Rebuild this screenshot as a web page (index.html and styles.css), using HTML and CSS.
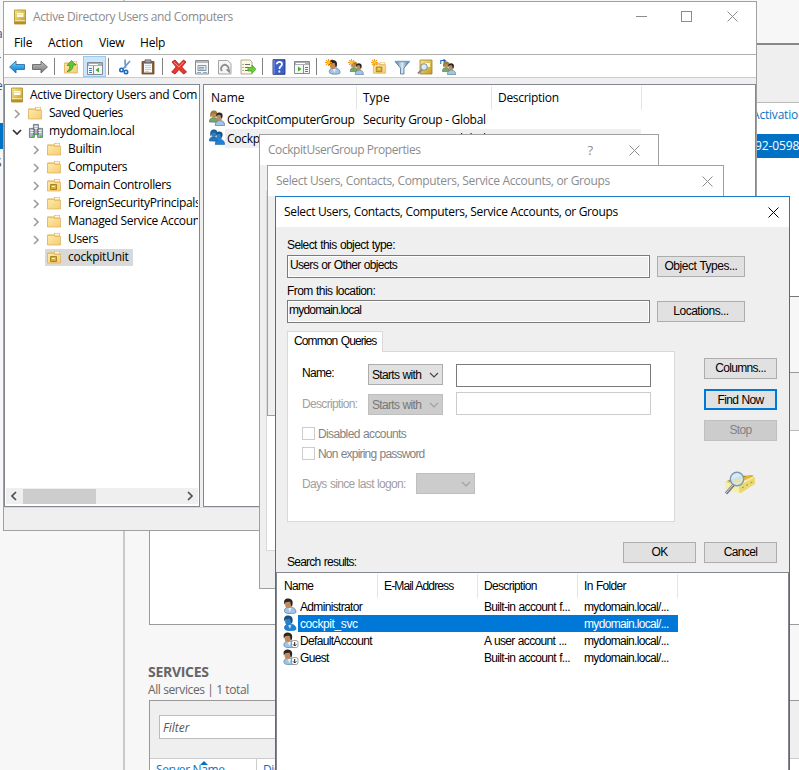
FILE: index.html
```html
<!DOCTYPE html>
<html lang="en">
<head>
<meta charset="utf-8">
<title>Active Directory Users and Computers</title>
<link rel="stylesheet" href="styles.css">
</head>
<body>
<svg class="defs" width="0" height="0" aria-hidden="true">
  <defs>
    <linearGradient id="gBlue" x1="0" y1="0" x2="0" y2="1"><stop offset="0" stop-color="#9fdcf8"/><stop offset=".5" stop-color="#2fa3e8"/><stop offset="1" stop-color="#1c79c8"/></linearGradient>
    <linearGradient id="gGrey" x1="0" y1="0" x2="0" y2="1"><stop offset="0" stop-color="#c4c4c4"/><stop offset="1" stop-color="#777"/></linearGradient>
    <linearGradient id="gFolder" x1="0" y1="0" x2="1" y2="1"><stop offset="0" stop-color="#ffeaa8"/><stop offset="1" stop-color="#f3cd76"/></linearGradient>
    <linearGradient id="gGold" x1="0" y1="0" x2="1" y2="1"><stop offset="0" stop-color="#f7e794"/><stop offset="1" stop-color="#c29a1c"/></linearGradient>
    <linearGradient id="gFunnel" x1="0" y1="0" x2="1" y2="0"><stop offset="0" stop-color="#4b7ba5"/><stop offset=".5" stop-color="#d9ebf7"/><stop offset="1" stop-color="#35658f"/></linearGradient>
  </defs>
  <symbol id="book" viewBox="0 0 14 16"><path d="M1.500 1h11v14h-11z" fill="url(#gGold)" stroke="#a98a2a" stroke-width=".8"/><path d="M4 4h6.500v4H4z" fill="#fffdf0"/><path d="M4 5.500h6.500" stroke="#e6d48a" stroke-width=".6"/><path d="M1.500 12h11v3h-11z" fill="#b8901c"/><path d="M2 11.800h10" stroke="#fbf3c8"/></symbol>
  <symbol id="folder" viewBox="0 0 16 16"><path d="M1.500 3.500h6.500V2h6v12H1.500z" fill="#e6b75c"/><path d="M8.800 2.600h4.600v2H8.800z" fill="#fff8dc"/><path d="M1.500 4.300h6l1 1h6v8.700h-13z" fill="url(#gFolder)" stroke="#dcae58" stroke-width=".7"/></symbol>
  <symbol id="ou" viewBox="0 0 16 16"><use href="#folder"/><path d="M4.500 7.500h6v5h-6z" fill="#d8ae2c" stroke="#9a7612" stroke-width=".8"/><path d="M6 9.500h3" stroke="#fff3b5"/></symbol>
  <symbol id="domain" viewBox="0 0 16 16"><g fill="#aeb7c2" stroke="#5f6873" stroke-width=".8"><path d="M5.400 1.400h5v10h-5zM1.400 5.400h5v9h-5zM9.600 5.400h5v9h-5z"/></g><path d="M2.500 7.500h3M2.500 9.500h3M10.500 7.500h3M10.500 9.500h3M6.500 3.500h3M6.500 5.500h3" stroke="#f2f5f8"/><path d="M4 12.500h2v1.500H4zM12 12.500h2v1.500h-2zM8 10h1.500v1.500H8z" fill="#3fd02c"/></symbol>
  <symbol id="person" viewBox="0 0 16 16"><path d="M2.500 13.500C2 10 5 9 8 9c4 0 6 2.500 6 5 0 1.300-2.500 1.700-6 1.700-3 0-5.300-.8-5.500-2.200z" fill="var(--shirt)" stroke="var(--edge)" stroke-width=".6"/><path d="M6 10l2 4 1.500-4.500z" fill="#fff" opacity=".75"/><ellipse cx="6.300" cy="6" rx="3.200" ry="4.300" fill="var(--skin)"/><path d="M2.500 6.500C1 2 3.500.2 6.500.4 10.500.6 11.800 4 9.800 8.800 8.500 8 9 5 8 3.800 6 3.400 4.500 4 3.600 4.200z" fill="var(--hair)"/></symbol>
  <symbol id="group" viewBox="0 0 16 16"><path d="M.4 12c-.2-2.600 1.300-4.300 4-4.300S9 9 9 12.300z" fill="var(--shirt2)" stroke="var(--edge)" stroke-width=".6"/><ellipse cx="4.800" cy="4.700" rx="2.600" ry="3.300" fill="var(--skin)"/><path d="M1.500 7.500C.6 3 1.800.5 5 .5s4 2.500 2.700 5C6.800 3.500 5 3.600 3.500 3.600z" fill="var(--hair2)"/><path d="M6.300 15.600c-.3-3.400 1.500-5.100 4.600-5.100s4.900 2 4.700 5.100z" fill="var(--shirt)" stroke="var(--edge)" stroke-width=".6"/><ellipse cx="10.300" cy="7.300" rx="2.700" ry="3.500" fill="var(--skin)"/><path d="M7.300 7C6.600 4 8 2.400 10.500 2.500c3 .1 3.900 2.600 2.500 6-1.500-.7-1-2.700-1.700-3.500-1.300-.5-2.300-.1-3 .2z" fill="var(--hair)"/></symbol>
  <symbol id="star" viewBox="0 0 8 8"><path d="M4 0v8M0 4h8M1.200 1.200l5.600 5.600M6.800 1.200L1.200 6.800" stroke="#f39a0d" stroke-width="1.200"/><circle cx="4" cy="4" r="1.500" fill="#ffd23c"/></symbol>
  <symbol id="down" viewBox="0 0 10 6"><path d="M1 1l4 4 4-4" fill="none" stroke="currentColor" stroke-width="1.100"/></symbol>
  <symbol id="cross" viewBox="0 0 11 11"><path d="M.5.5l10 10M10.500.5l-10 10" stroke="currentColor" stroke-width="1"/></symbol>
  <symbol id="right" viewBox="0 0 6 10"><path d="M1 1l4 4-4 4" fill="none" stroke="currentColor" stroke-width="1.700"/></symbol>
</svg>

<main class="desktop">
  <section class="manager">
    <aside class="manager-nav">
      <p class="nav-item n1">ar</p><p class="nav-item n2">r</p><p class="nav-item n3">er</p>
      <p class="nav-item active"></p><p class="nav-item n5">S</p>
    </aside>
    <div class="manager-body">
      <div class="tile tile-events">
        <div class="tile-bar"></div>
        <div class="tile-link">Activation</div>
        <div class="tile-row">92-0598</div>
      </div>
      <div class="tile tile-mid"><div class="tile-bar"></div></div>
      <h2 class="services-title">SERVICES</h2>
      <p class="services-sub">All services | 1 total</p>
      <div class="tile tile-services">
        <div class="filter-bar"><div class="filter">Filter</div></div>
        <div class="service-head"><span class="server-name">Server Name<i class="sort"></i></span><span class="display-name">Display Name</span></div>
      </div>
    </div>
  </section>

  <section class="window aduc">
    <header class="caption">
      <svg class="i-book"><use href="#book"/></svg><span class="caption-text aduc-title">Active Directory Users and Computers</span>
      <span class="win-min"></span><span class="win-max"></span><svg class="win-close"><use href="#cross"/></svg>
    </header>
    <nav class="menu"><span class="m-file">File</span><span class="m-action">Action</span><span class="m-view">View</span><span class="m-help">Help</span></nav>
    <div class="toolbar">
      <span class="tool"><svg viewBox="0 0 16 16"><path d="M.6 8L7 2v3.500h8.500v5H7V14z" fill="url(#gBlue)" stroke="#2a6ea8" stroke-width=".9"/></svg></span>
      <span class="tool"><svg viewBox="0 0 16 16"><path d="M15.400 8L9 2v3.500H.5v5H9V14z" fill="url(#gGrey)" stroke="#666" stroke-width=".9"/></svg></span>
      <span class="sep"></span>
      <span class="tool"><svg viewBox="0 0 16 16"><use href="#folder"/><path d="M4 12.500c2-1 3-3 2.800-6H4l4.500-5L13 6h-2.800c0 3.500-2 6.500-6.200 6.500z" fill="#62c537" stroke="#348d17" stroke-width=".7"/></svg></span>
      <span class="tool on"><svg viewBox="0 0 16 16"><path d="M.5 2.500h15v12H.5z" fill="#f7f7f7" stroke="#858b92"/><path d="M1 3h14v3H1z" fill="#a9b0b8"/><path d="M2 4.500h9" stroke="#fff"/><path d="M6.500 6v8" stroke="#858b92"/><path d="M2 8.500h3M2 10.500h3M2 12.500h3" stroke="#3d7fc1"/><path d="M12 7.500v5L8.500 10z" fill="#3fae2a"/></svg></span>
      <span class="sep"></span>
      <span class="tool"><svg viewBox="0 0 16 16"><path d="M8 .5L8.500 9M13 2L6 10" stroke="#6d9dc8" stroke-width="1.800"/><circle cx="4.500" cy="11" r="1.700" fill="none" stroke="#1769bd" stroke-width="1.600"/><circle cx="9" cy="13" r="1.700" fill="none" stroke="#1769bd" stroke-width="1.600"/></svg></span>
      <span class="tool"><svg viewBox="0 0 16 16"><path d="M2 2.500h12v12.500H2z" fill="#8a5f3a" stroke="#6b4522" stroke-width=".8"/><path d="M4 4.500h8v9H4z" fill="#f5f8fb"/><path d="M5 .8h6v3H5z" fill="#9aa2aa" stroke="#555" stroke-width=".7"/><path d="M5 6.500h6M5 8.500h6M5 10.500h6M5 12.500h4" stroke="#b7c4cf" stroke-width=".8"/></svg></span>
      <span class="sep"></span>
      <span class="tool"><svg viewBox="0 0 16 16"><path d="M1 3l3-2 4 4.500L12.500 1l2.500 2-4.300 5 4.800 5-3 2L8 10.500 4 15l-3.300-2L5.200 8z" fill="#e23b32" stroke="#b81c1a" stroke-width=".9"/><path d="M3 3l5 5 4.500-5" stroke="#ff8b80" fill="none"/></svg></span>
      <span class="tool"><svg viewBox="0 0 16 16"><path d="M1.500 1.500h13v13.500h-13z" fill="#f6f6f6" stroke="#8b8b8b"/><path d="M2 3h12" stroke="#b4bac0" stroke-width="2"/><path d="M4 6.500h8v5H4z" fill="#e2edf6" stroke="#8798a6"/><path d="M3 13.500h4M9 13.500h4" stroke="#8da9bf"/><path d="M5 8.500h5M5 10h5" stroke="#6c8ba5" stroke-width=".8"/></svg></span>
      <span class="tool"><svg viewBox="0 0 16 16"><path d="M1.500 1.500h9l3.500 3V15H1.500z" fill="#f5f5f5" stroke="#a5a5a5"/><path d="M5 12a3.700 3.700 0 1 1 6-.5" fill="none" stroke="#8d8d8d" stroke-width="1.700"/><path d="M8.500 10.500h4.500v4z" fill="#8d8d8d"/></svg></span>
      <span class="tool"><svg viewBox="0 0 16 16"><path d="M1 1h9l2 2v12H1z" fill="#fdf8df" stroke="#a9a48c" stroke-width=".9"/><path d="M2.500 5.500h1M5 5.500h5M2.500 8.500h1M5 8.500h3M2.500 11.500h1M5 11.500h4" stroke="#6d6d6d"/><path d="M8 8.500h4V6l4 4.300-4 4V12H8z" fill="#68cf3a" stroke="#3c9720" stroke-width=".7"/></svg></span>
      <span class="sep"></span>
      <span class="tool"><svg viewBox="0 0 16 16"><path d="M2 .7h12v14.600H2z" fill="#3d61c9" stroke="#24397f" stroke-width=".9"/><path d="M3 1v14" stroke="#829be6"/><path d="M5.800 5.300c0-3.300 5.200-3 5.200 0 0 2-2.600 2-2.600 4.700M8.400 11.500v2" fill="none" stroke="#fff" stroke-width="1.700"/></svg></span>
      <span class="tool"><svg viewBox="0 0 16 16"><path d="M.5 2.500h15v12H.5z" fill="#f7f7f7" stroke="#858b92"/><path d="M1 3h14v3H1z" fill="#a9b0b8"/><path d="M2 4.500h9" stroke="#fff"/><path d="M9.500 6v8" stroke="#858b92"/><path d="M11 8.500h3M11 10.500h3M11 12.500h3" stroke="#3d7fc1"/><path d="M4 7.500v5L7.500 10z" fill="#3fae2a"/></svg></span>
      <span class="sep"></span>
      <span class="tool"><svg viewBox="0 0 16 16"><use href="#person" x="2" width="15" height="16"/><use href="#star" width="7" height="7"/></svg></span>
      <span class="tool"><svg viewBox="0 0 16 16"><use href="#group" x="1.500" y="2" width="14.500" height="14"/><use href="#star" width="7" height="7"/></svg></span>
      <span class="tool"><svg viewBox="0 0 16 16"><use href="#ou" x="1" y="1" width="15" height="15"/><use href="#star" width="7" height="7"/></svg></span>
      <span class="tool"><svg viewBox="0 0 16 16"><path d="M1 2.500h14.500L10 9v6H6.500V9z" fill="url(#gFunnel)" stroke="#3d6285" stroke-width=".7"/><path d="M1 2.500h14.500" stroke="#7d9fbc" stroke-width="1.500"/></svg></span>
      <span class="tool"><svg viewBox="0 0 16 16"><path d="M3 1h12v14H3z" fill="url(#gGold)" stroke="#a18122" stroke-width=".8"/><path d="M6 4h7v4H6z" fill="#fff8d6"/><path d="M5 10.500L1 14.500" stroke="#8b8b8b" stroke-width="2"/><circle cx="7" cy="8" r="3.300" fill="#d9ebf7" stroke="#858b92"/></svg></span>
      <span class="tool"><svg viewBox="0 0 16 16"><use href="#group" x="2" y="2" width="14" height="14"/><path d="M.8 5V1.500H5M3.500.2L5.500 1.700 3.500 3.300" fill="none" stroke="#2468b5" stroke-width="1.100"/></svg></span>
    </div>
    <div class="panes">
      <div class="tree">
        <div class="node root"><svg class="i-book"><use href="#book"/></svg><span class="t-root">Active Directory Users and Com</span></div>
        <div class="node l1"><svg class="chev"><use href="#right"/></svg><svg class="ico"><use href="#folder"/></svg><span class="t-saved">Saved Queries</span></div>
        <div class="node l1"><svg class="chev-open" viewBox="0 0 10 6"><path d="M1 1l4 4 4-4" fill="none" stroke="#333" stroke-width="1.700"/></svg><svg class="ico i-domain"><use href="#domain"/></svg><span class="t-domain">mydomain.local</span></div>
        <div class="node l2"><svg class="chev"><use href="#right"/></svg><svg class="ico"><use href="#folder"/></svg><span>Builtin</span></div>
        <div class="node l2"><svg class="chev"><use href="#right"/></svg><svg class="ico"><use href="#folder"/></svg><span>Computers</span></div>
        <div class="node l2"><svg class="chev"><use href="#right"/></svg><svg class="ico"><use href="#ou"/></svg><span>Domain Controllers</span></div>
        <div class="node l2"><svg class="chev"><use href="#right"/></svg><svg class="ico"><use href="#folder"/></svg><span>ForeignSecurityPrincipals</span></div>
        <div class="node l2"><svg class="chev"><use href="#right"/></svg><svg class="ico"><use href="#folder"/></svg><span class="t-msa">Managed Service Accounts</span></div>
        <div class="node l2"><svg class="chev"><use href="#right"/></svg><svg class="ico"><use href="#folder"/></svg><span>Users</span></div>
        <div class="node unit"><div class="picked"><svg class="ico"><use href="#ou"/></svg><span class="t-unit">cockpitUnit</span></div></div>
        <div class="hscroll"><svg class="arrow flip"><use href="#right"/></svg><span class="thumb"></span><svg class="arrow"><use href="#right"/></svg></div>
      </div>
      <div class="list">
        <div class="list-head"><span class="c1">Name</span><span class="c2">Type</span><span class="c3">Description</span></div>
        <div class="list-row"><svg class="i-group"><use href="#group"/></svg><div class="cells"><span class="g1">CockpitComputerGroup</span><span class="g2">Security Group - Global</span></div></div>
        <div class="list-row second"><svg class="i-group blue"><use href="#group"/></svg><div class="cells"><span class="g1">CockpitUserGroup</span><span class="g2">Security Group - Global</span></div></div>
      </div>
    </div>
  </section>

  <section class="window props">
    <header class="caption"><span class="caption-text props-title">CockpitUserGroup Properties</span><span class="help">?</span><svg class="win-close"><use href="#cross"/></svg></header>
    <div class="props-body"><div class="props-page"></div></div>
  </section>

  <section class="window picker">
    <header class="caption"><span class="caption-text pick-title">Select Users, Contacts, Computers, Service Accounts, or Groups</span><svg class="win-close"><use href="#cross"/></svg></header>
    <div class="picker-body"></div>
  </section>

  <section class="window finder">
    <header class="caption"><span class="caption-text pick-title">Select Users, Contacts, Computers, Service Accounts, or Groups</span><svg class="win-close"><use href="#cross"/></svg></header>
    <div class="form">
      <label class="lbl">Select this object type:</label>
      <div class="line"><div class="readout">Users or Other objects</div><div class="btn wide b-types">Object Types...</div></div>
      <label class="lbl">From this location:</label>
      <div class="line"><div class="readout place">mydomain.local</div><div class="btn wide">Locations...</div></div>
      <div class="query">
        <div class="tabs">
          <div class="tab">Common Queries</div>
          <div class="page">
            <div class="qrow name"><span class="qlabel">Name:</span><div class="select">Starts with<svg><use href="#down"/></svg></div><div class="input"></div></div>
            <div class="qrow desc"><span class="qlabel">Description:</span><div class="select off">Starts with<svg><use href="#down"/></svg></div><div class="input off"></div></div>
            <div class="check"><i></i><span>Disabled accounts</span></div>
            <div class="check"><i></i><span class="c-non">Non expiring password</span></div>
            <div class="qrow days"><span class="dlabel">Days since last logon:</span><div class="select off short"><svg><use href="#down"/></svg></div></div>
          </div>
        </div>
        <div class="side">
          <div class="btn">Columns...</div><div class="btn primary">Find Now</div><div class="btn off">Stop</div>
          <svg class="search-art" viewBox="0 0 32 24"><path d="M1 11L19 4h8l4 3v6L17 22 1 18z" fill="#eadb7a"/><path d="M1 11l14 4v7L1 18z" fill="#f6efac"/><path d="M15 15L31 6v6L16 22z" fill="#e9d873"/><path d="M3 10l13-5h13L16 13z" fill="#a3882a"/><path d="M10 11l15-7h5l-15 9z" fill="#efb52a"/><path d="M13 12.500L28 6l2 .5-15 8z" fill="#f8efb0"/><path d="M18 17l12-7" stroke="#9d8423" stroke-dasharray="2 3"/><path d="M10 13.500L2 22.500" stroke="#757982" stroke-width="3"/><path d="M9 14L2 22" stroke="#d9dce2"/><circle cx="13" cy="8" r="6.700" fill="#d3ecfa" fill-opacity=".9" stroke="#7f9aae" stroke-width="1.400"/><path d="M9 9c3-1 6-1 8-1v3c-3 2-6 1-8-2z" fill="#e6e0ae"/></svg>
        </div>
      </div>
      <div class="footer"><span class="results-label">Search results:</span><div class="btn">OK</div><div class="btn">Cancel</div></div>
    </div>
    <div class="results">
      <div class="res-head"><span>Name</span><span class="mail">E-Mail Address</span><span>Description</span><span>In Folder</span></div>
      <div class="res-row"><svg class="i-user"><use href="#person" x="-1"/></svg><div class="res-cells"><span class="r1">Administrator</span><span class="r3">Built-in account f...</span><span class="r4">mydomain.local/...</span></div></div>
      <div class="res-row sel"><svg class="i-user blue"><use href="#person" x="-1"/></svg><div class="res-cells"><span class="r1 svc">cockpit_svc</span><span class="r3"></span><span class="r4">mydomain.local/...</span></div></div>
      <div class="res-row"><svg class="i-user" viewBox="0 0 16 16"><use href="#person" x="-1.500"/><rect x="8.500" y="8.500" width="6.500" height="7" rx="2" fill="#fff" stroke="#777" stroke-width=".7"/><path d="M11.700 10v4M10 12.300l1.700 1.700 1.700-1.700" fill="none" stroke="#222"/></svg><div class="res-cells"><span class="r1">DefaultAccount</span><span class="r3">A user account ...</span><span class="r4">mydomain.local/...</span></div></div>
      <div class="res-row"><svg class="i-user" viewBox="0 0 16 16"><use href="#person" x="-1.500"/><rect x="8.500" y="8.500" width="6.500" height="7" rx="2" fill="#fff" stroke="#777" stroke-width=".7"/><path d="M11.700 10v4M10 12.300l1.700 1.700 1.700-1.700" fill="none" stroke="#222"/></svg><div class="res-cells"><span class="r1">Guest</span><span class="r3">Built-in account f...</span><span class="r4">mydomain.local/...</span></div></div>
    </div>
  </section>
</main>
</body>
</html>
```

FILE: styles.css
```css
* { box-sizing: border-box; }
html, body { margin: 0; height: 770px; overflow: hidden; }
body { font: 12px/18px "Open Sans", "Noto Sans", sans-serif; color: #000; background: #f7f7f7; }
p, h2 { margin: 0; }
svg { display: block; flex: none; }
.defs { position: absolute; }
.desktop {
  position: relative; width: 799px; height: 770px; overflow: hidden; white-space: nowrap;
  --skin: #c08a5c; --hair: #2b2622; --hair2: #9c7a34; --shirt: #9fc6ea; --shirt2: #6fae5c; --edge: #46607a;
}
.blue { --skin: #2a7fc4; --hair: #174f80; --hair2: #1c5f98; --shirt: #1c82dc; --shirt2: #2774b8; --edge: #1a5f9f; }

/* background: server manager */
.manager { display: flex; height: 770px; }
.manager-nav { flex: none; width: 125px; border-right: 2px solid #c9c9c9; background: #f7f7f7; color: #31538f; }
.nav-item { height: 26px; margin-left: -4px; line-height: 26px; }
.n1 { margin-top: 21px; }
.n5 { color: #444; margin: 1px 0 0 -5px; }
.manager-nav .active { margin: 24px 0 0; background: #0072c6; }
.manager-body { flex: none; width: 674px; padding-left: 24px; }
.tile { background: #fff; border-left: 1px solid #999; }
.tile-bar { flex: none; height: 58px; background: #efefef; border-bottom: 1px solid #bbb; }
.tile-events { margin-top: 43px; height: 254px; border-top: 2px solid #888; border-bottom: 1px solid #777; display: flex; flex-direction: column; overflow: hidden; }
.tile-link { height: 31px; padding: 3px 0 0 602px; color: #0e74c2; letter-spacing: -.2px; }
.tile-row { height: 24px; line-height: 24px; padding-left: 605px; background: #0072c6; color: #fff; letter-spacing: -.1px; }
.tile-mid { margin-top: 75px; height: 253px; border-top: 1px solid #999; border-bottom: 1px solid #999; }
.services-title { margin: 38px 0 0 -1px; height: 18px; font-size: 14px; line-height: 18px; color: #666; letter-spacing: -.3px; }
.services-sub { margin-left: -1px; height: 19px; line-height: 18px; color: #666; letter-spacing: -.4px; }
.tile-services { height: 80px; border-top: 1px solid #999; }
.filter-bar { height: 58px; padding: 14px 0 0 9px; background: #efefef; border-bottom: 1px solid #ccc; }
.filter { width: 300px; height: 24px; padding-left: 3px; line-height: 24px; border: 1px solid #bbb; background: #fff; color: #555; font-style: italic; }
.service-head { display: flex; line-height: 22px; color: #0e74c2; letter-spacing: -.35px; }
.server-name { position: relative; width: 107px; padding-left: 6px; border-right: 1px solid #ccc; }
.display-name { padding-left: 6px; }
.sort { position: absolute; left: 50px; top: 2px; border: 4px solid transparent; border-top: 0; border-bottom-color: #0072c6; }

/* windows */
.window { position: absolute; display: flex; flex-direction: column; border: 1px solid #a0a0a0; background: #efefef; }
.caption { flex: none; display: flex; align-items: center; height: 30px; background: #fff; color: #8c8c8c; }
.caption-text { flex: 1; }
.win-close { width: 11px; height: 11px; }
.aduc { left: 3px; top: 1px; width: 754px; height: 530px; }
.i-book { width: 14px; height: 16px; }
.aduc .caption { padding: 0 18px 0 9px; height: 29px; }
.aduc-title { margin-left: 6px; letter-spacing: -.36px; }
.win-min { width: 11px; height: 1px; background: #8c8c8c; margin-right: 34px; }
.win-max { width: 11px; height: 11px; border: 1px solid #8c8c8c; margin-right: 35px; }
.menu { flex: none; display: flex; height: 24px; padding-left: 10px; background: #fff; border-bottom: 1px solid #b0b0b0; line-height: 23px; }
.m-file { width: 34px; letter-spacing: -.2px; } .m-action { width: 51px; } .m-view { width: 41px; letter-spacing: -.2px; } .m-help { letter-spacing: -.2px; }
.toolbar { flex: none; display: flex; height: 23px; padding-left: 2px; background: #fff; border-bottom: 1px solid #ccc; }
.tool { flex: none; width: 23px; height: 22px; padding: 4px 0 0 3px; }
.tool svg { width: 16px; height: 16px; }
.tool.on { padding: 3px 0 0 3px; margin-top: 1px; height: 21px; border: 1px solid #99cbf2; background: #cce5f9; }
.sep { flex: none; width: 1px; height: 17px; margin: 3px 5px 0 2px; background: #808080; }
.panes { flex: none; display: flex; gap: 3px; height: 430px; padding-top: 6px; border-bottom: 1px solid #d8d8d8; }
.tree { flex: none; display: flex; flex-direction: column; width: 196px; height: 423px; padding: 1px; border: 1px solid #828790; background: #fff; letter-spacing: -.33px; }
.list { flex: none; width: 553px; height: 423px; border: 1px solid #828790; background: #fff; }
.node { display: flex; align-items: center; width: 192px; height: 18px; overflow: hidden; }
.root { padding-left: 4px; } .root span { margin-left: 6px; }
.l1 { padding-left: 8px; } .l2 { padding-left: 27px; }
.chev { width: 6px; height: 10px; margin: 1px 6px 0 0; color: #a0a0a0; }
.chev-open { width: 10px; height: 6px; margin: 2px 4px 0 -2px; }
.ico { width: 16px; height: 16px; margin-right: 6px; }
.l1 .ico { margin-left: 1px; }
.l2 .ico { margin-left: 1px; }
.l1 .i-domain { margin: 0 5px 0 2px; }
.unit { padding-left: 39px; }
.picked { display: flex; align-items: center; width: 88px; height: 17px; padding-left: 1px; background: #d9d9d9; }
.t-root { letter-spacing: -.31px; }
.t-saved { letter-spacing: -.5px; }
.t-domain, .t-unit { letter-spacing: -.22px; }
.hscroll { display: flex; align-items: center; height: 16px; margin-top: auto; margin-bottom: 1px; padding: 0 5px; background: #efefef; color: #505050; }
.arrow { width: 6px; height: 10px; } .flip { transform: scaleX(-1); }
.thumb { width: 73px; height: 15px; margin: 0 auto 0 6px; background: #cdcdcd; }
.list-head { display: flex; height: 25px; padding-top: 1px; line-height: 24px; }
.list-head span { height: 24px; border-right: 1px solid #e5e5e5; }
.c1 { width: 153px; padding-left: 7px; } .c2 { width: 135px; padding-left: 6px; } .c3 { width: 150px; padding-left: 6px; letter-spacing: -.4px; }
.list-head .c3 { letter-spacing: -.3px; }
.list-row { display: flex; height: 19px; padding-left: 5px; }
.i-group { width: 16px; height: 16px; }
.cells { display: flex; width: 416px; height: 19px; padding-left: 2px; line-height: 19px; }
.second .cells { background: #efefef; }
.g1 { width: 136px; letter-spacing: -.3px; } .g2 { letter-spacing: -.29px; }

.props { left: 259px; top: 134px; width: 400px; height: 455px; }
.props .caption { padding: 0 18px 0 8px; }
.props-title { letter-spacing: -.44px; }
.help { margin-right: 36px; font-size: 13px; }
.props-body { flex: 1; padding: 26px 6px 37px; }
.props-page { height: 100%; border: 1px solid #d9d9d9; background: #fff; }
.picker { left: 267px; top: 165px; width: 457px; height: 251px; }
.picker .caption { padding: 0 10px 0 8px; }
.finder { left: 275px; top: 196px; width: 515px; height: 590px; border-color: #1b7ccb; font: 12px/16px "Liberation Sans", Arial, sans-serif; letter-spacing: -.67px; word-spacing: .6px; }
.finder .caption { padding: 0 10px 0 8px; color: #000; font: 12px/18px "Open Sans", sans-serif; word-spacing: 0; }
.pick-title { letter-spacing: -.33px; }

/* find form */
.form { padding: 10px 12px 0 11px; height: 345px; }
.lbl { display: block; height: 18px; line-height: 16px; letter-spacing: -.58px; }
.line { display: flex; gap: 7px; height: 23px; margin-bottom: 5px; }
.line + .lbl { height: 17px; }
.line .btn { margin-top: 1px; }
.readout { width: 363px; height: 23px; padding-left: 2px; line-height: 19px; border: 1px solid #7a7a7a; box-shadow: inset 0 0 0 1px #fff; }
.place { padding-left: 1px; letter-spacing: -.8px; }
.btn { width: 73px; height: 21px; line-height: 19px; text-align: center; border: 1px solid #adadad; background: #e1e1e1; }
.btn.wide { width: 88px; letter-spacing: -.5px; }
.btn.primary { border: 2px solid #0078d7; line-height: 18px; }
.btn.off { background: #ccc; border-color: #bfbfbf; color: #838383; }
.query { display: flex; justify-content: space-between; height: 191px; margin-top: 8px; }
.tabs { width: 388px; }
.tab { position: relative; width: 96px; height: 21px; padding-left: 6px; line-height: 19px; background: #fff; border: 1px solid #d9d9d9; border-bottom: 0; letter-spacing: -.95px; word-spacing: 1px; }
.tab { letter-spacing: -.9px; }
.page { height: 171px; margin-top: -1px; padding: 12px 0 0 14px; background: #fff; border: 1px solid #d9d9d9; }
.qrow { display: flex; height: 30px; }
.qlabel { width: 66px; line-height: 19px; }
.desc, .days, .check { color: #838383; }
.desc .qlabel, .days .dlabel { color: #a0a0a0; }
.select { display: flex; justify-content: space-between; align-items: center; width: 75px; height: 21px; padding: 0 3px 0 3px; border: 1px solid #adadad; background: #e1e1e1; }
.select svg { width: 10px; height: 6px; color: #444; }
.select.off { background: #ccc; border-color: #bfbfbf; color: #777; }
.select.off svg { color: #a0a0a0; }
.input { width: 195px; height: 23px; margin-left: 13px; border: 1px solid #7a7a7a; background: #fff; }
.input.off { border-color: #ccc; margin-top: -2px; }
.desc { height: 33px; }
.desc .qlabel { line-height: 20px; }
.check { display: flex; gap: 3px; height: 20px; line-height: 14px; letter-spacing: -.62px; }
.c-non { letter-spacing: -.8px; }
.check i { width: 13px; height: 13px; border: 1px solid #ccc; }
.days { margin-top: 6px; }
.dlabel { width: 114px; line-height: 22px; }
.short { width: 59px; justify-content: flex-end; }
.side { display: flex; flex-direction: column; gap: 10px; width: 73px; padding-top: 27px; }
.search-art { width: 32px; height: 24px; margin: 20px 0 0 20px; }
.footer { display: flex; gap: 8px; margin-top: 20px; }
.results-label { flex: 1; padding-top: 12px; letter-spacing: -.75px; }
.results { flex: 1; width: 513px; border: 1px solid #828790; background: #fff; }
.res-head { display: flex; height: 25px; padding-top: 1px; line-height: 24px; }
.res-head span { width: 100px; height: 24px; padding-left: 6px; border-right: 1px solid #e5e5e5; }
.res-head span:first-child { width: 101px; padding-left: 7px; }
.res-head .mail { letter-spacing: -.85px; }
.res-row { display: flex; height: 17px; padding-left: 6px; line-height: 18px; }
.i-user { width: 16px; height: 16px; margin-right: -1px; }
.res-cells { display: flex; width: 380px; height: 17px; padding-left: 2px; }
.sel .res-cells { background: #0078d7; color: #fff; }
.r1 { width: 184px; } .r3 { width: 100px; }
.r1.svc { letter-spacing: -.4px; }
```
